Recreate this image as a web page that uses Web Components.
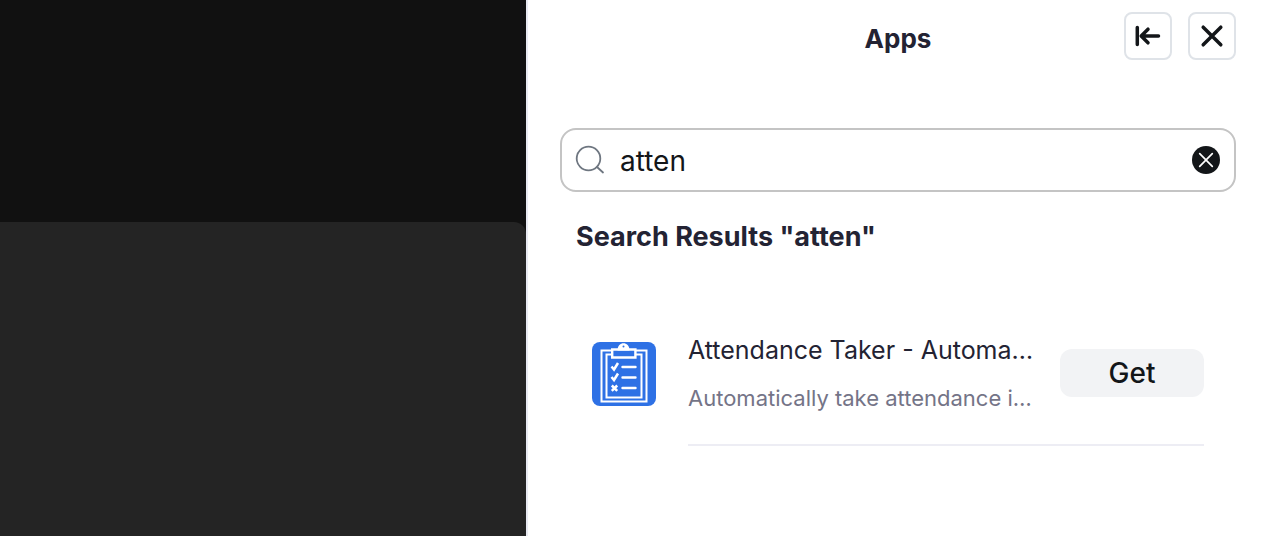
<!DOCTYPE html>
<html lang="en">
<head>
<meta charset="utf-8">
<meta name="viewport" content="width=device-width, initial-scale=1">
<title>Apps</title>
<style>
body { margin: 0; background: #fff; color: #232333; font-family: Inter, Roboto, "Liberation Sans", sans-serif; }
</style>
</head>
<body>
<meeting-window>
  <video-stage slot="stage"></video-stage>
  <side-panel heading="Apps">
    <search-box value="atten"></search-box>
    <result-list query="atten">
      <app-result>
        <app-logo slot="logo"></app-logo>
        <span slot="name">Attendance Taker - Automa…</span>
        <span slot="summary">Automatically take attendance i…</span>
      </app-result>
    </result-list>
  </side-panel>
</meeting-window>
<script>
const define = (name, html, setup) => customElements.define(name, class extends HTMLElement {
  connectedCallback() {
    if (this.shadowRoot) return;
    const root = this.attachShadow({ mode: "open" });
    root.innerHTML = html;
    if (setup) setup(this, root);
  }
});

define("meeting-window", `
<style>
:host { display: grid; grid-template-columns: minmax(0, 263fr) minmax(0, 368fr); min-height: 100vh; }
</style>
<slot name="stage"></slot><slot></slot>`);

define("video-stage", `
<style>
:host { display: flex; flex-direction: column; background: #111; }
.share { flex: 1; margin-top: 222px; background: #242424; border-top-right-radius: 12px; }
</style>
<div class="share"></div>`);

define("side-panel", `
<style>
:host { display: block; box-sizing: border-box; border-left: 2px solid #e8eaf2; padding: 12px 26px 24px 32px; background: #fff; }
header { display: grid; grid-template-columns: 112px 1fr 112px; align-items: center; margin-bottom: 68px; }
h1 { grid-column: 2; margin: 0; padding-top: 6px; text-align: center; font-size: 26px; line-height: 32px; font-weight: 700; }
.actions { display: flex; gap: 16px; }
button { box-sizing: border-box; width: 48px; height: 48px; padding: 0; display: grid; place-items: center; background: #fff; border: 2px solid #dfe3e8; border-radius: 8px; color: #131619; }
svg { display: block; }
</style>
<header>
  <h1></h1>
  <div class="actions">
    <button type="button" aria-label="Dock panel"><svg width="28" height="28" viewBox="0 0 28 28" fill="none" stroke="currentColor" stroke-width="3.500" stroke-linecap="round" stroke-linejoin="round"><path d="M3.300 5.500v17M24.500 14H7.500M14 7.200L7.200 14l6.800 6.800"/></svg></button>
    <button type="button" aria-label="Close"><svg width="28" height="28" viewBox="0 0 28 28" fill="none" stroke="currentColor" stroke-width="3.500" stroke-linecap="round"><path d="M5.200 5.200l17.600 17.600M22.800 5.200L5.200 22.800"/></svg></button>
  </div>
</header>
<slot></slot>`, (host, root) => {
  root.querySelector("h1").textContent = host.getAttribute("heading");
});

define("search-box", `
<style>
:host { display: block; }
.field { box-sizing: border-box; height: 64px; display: flex; align-items: center; gap: 14px; padding: 0 14px 0 12px; border: 2px solid #c4c4c4; border-radius: 16px; background: #fff; }
svg { display: block; flex: none; }
input { flex: 1; min-width: 0; padding: 2px 0 0; border: 0; outline: 0; background: none; color: #131619; font: 400 28px/32px Inter, Roboto, "Liberation Sans", sans-serif; }
button { flex: none; padding: 0; border: 0; background: none; }
</style>
<div class="field">
  <svg width="32" height="32" viewBox="0 0 32 32" fill="none" stroke="#6e7680" stroke-width="1.800" stroke-linecap="round"><circle cx="14.500" cy="14.500" r="11.800"/><path d="M23 23l6 5.500"/></svg>
  <input type="text" aria-label="Search apps">
  <button type="button" aria-label="Clear search"><svg width="28" height="28" viewBox="0 0 28 28"><circle cx="14" cy="14" r="14" fill="#131619"/><path d="M7.700 7.700l12.600 12.600M20.300 7.700L7.700 20.300" stroke="#fff" stroke-width="1.700" stroke-linecap="round"/></svg></button>
</div>`, (host, root) => {
  const input = root.querySelector("input");
  input.value = host.getAttribute("value") || "";
  root.querySelector("button").addEventListener("click", () => { input.value = ""; input.focus(); });
});

define("result-list", `
<style>
:host { display: block; padding: 28px 16px 0; }
h2 { margin: 0 0 64px; font-size: 27px; line-height: 34px; font-weight: 700; }
.items { padding: 0 16px; }
</style>
<h2></h2>
<div class="items"><slot></slot></div>`, (host, root) => {
  root.querySelector("h2").textContent = 'Search Results "' + host.getAttribute("query") + '"';
});

define("app-result", `
<style>
:host { display: grid; grid-template-columns: 64px minmax(0, 1fr); column-gap: 32px; }
.logo { padding-top: 24px; }
.body { display: grid; grid-template-columns: minmax(0, 1fr) 144px; column-gap: 20px; align-items: center; padding: 14px 0 30px; border-bottom: 2px solid #ededf4; }
.text { display: grid; row-gap: 14px; }
.name, .summary { overflow: hidden; white-space: nowrap; text-overflow: ellipsis; }
.name { font-size: 25px; line-height: 36px; }
.summary { font-size: 22px; line-height: 32px; color: #747487; }
button { height: 48px; padding: 0; border: 0; border-radius: 12px; background: #f2f3f5; color: #131619; font: 500 28px/32px Inter, Roboto, "Liberation Sans", sans-serif; }
</style>
<div class="logo"><slot name="logo"></slot></div>
<div class="body">
  <div class="text">
    <div class="name"><slot name="name"></slot></div>
    <div class="summary"><slot name="summary"></slot></div>
  </div>
  <button type="button">Get</button>
</div>`);

define("app-logo", `
<style>:host { display: block; } svg { display: block; }</style>
<svg width="64" height="64" viewBox="0 0 64 64" fill="none" aria-hidden="true">
  <rect width="64" height="64" rx="8" fill="#2e71e5"/>
  <g stroke="#fff">
    <path d="M20 8.500H9.500v51h45v-51H44" stroke-width="2"/>
    <path d="M20 12.500h-5.500v43h35v-43H44" stroke-width="2"/>
    <path d="M20.200 7.500h23.200v8H20.200z" stroke-width="2.400"/>
    <path d="M30.500 25h13M30.500 35.500h13M30.500 46h13" stroke-width="2.400" stroke-linecap="round"/>
    <path d="M19.500 24.500l2.500 3 4-6.500M19.500 35l2.500 3 4-6.500M19.800 43.500l5.400 5.400M25.200 43.500l-5.400 5.400" stroke-width="2.500"/>
  </g>
  <path d="M25.500 8.500c0-9.600 12-9.600 12 0z" fill="#fff"/>
  <circle cx="31.500" cy="4.500" r="1" fill="#2e71e5"/>
</svg>`);
</script>
</body>
</html>
